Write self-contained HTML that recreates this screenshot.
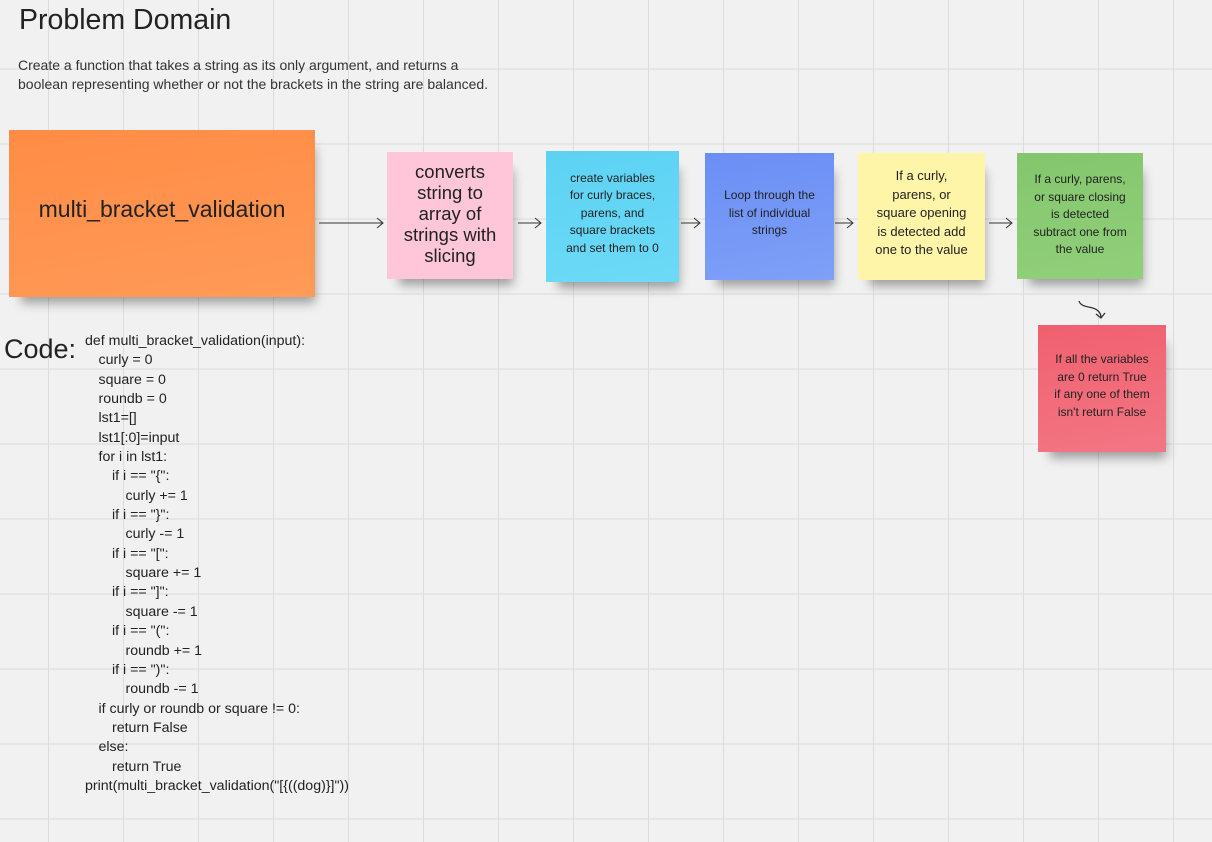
<!DOCTYPE html>
<html><head><meta charset="utf-8"><style>
html,body{margin:0;padding:0}
body{width:1212px;height:842px;overflow:hidden;position:relative;background:#f1f1f1;font-family:"Liberation Sans",sans-serif;color:#222;
background-image:linear-gradient(to right,#dcdcdc 0,#dcdcdc 1px,transparent 1px),linear-gradient(to bottom,#e6e6e6 0,#e6e6e6 2px,transparent 2px);
background-size:75px 75px,75px 75px;background-position:48px 0,0 68px}
.a{position:absolute}
.n{position:absolute;display:flex;align-items:center;justify-content:center;text-align:center;box-sizing:border-box;box-shadow:6px 12px 10px -6px rgba(0,0,0,.35);white-space:nowrap}
.t{font-size:12px;line-height:17.5px;color:#222}
.code{position:absolute;left:85px;top:332px;font-size:14.2px;line-height:19.35px;white-space:pre;color:#222}
.code div{height:19.35px}
.i1{margin-left:13.5px}.i2{margin-left:27px}.i3{margin-left:40.5px}
</style></head><body>
<div class="a" style="left:19px;top:4px;font-size:28.5px;color:#222">Problem Domain</div>
<div class="a" style="left:18px;top:56px;font-size:14px;line-height:19px;color:#333;white-space:nowrap">Create a function that takes a string as its only argument, and returns a<br>boolean representing whether or not the brackets in the string are balanced.</div>

<div class="n" style="left:9px;top:130px;width:306px;height:167px;background:linear-gradient(170deg,#ff8c45,#ff9a58);font-size:23px;padding-bottom:8px">multi_bracket_validation</div>
<div class="n" style="left:387px;top:152px;width:126px;height:127px;background:#fec6d8;font-size:18.5px;line-height:21px;padding-bottom:5px">converts<br>string to<br>array of<br>strings with<br>slicing</div>
<div class="n t" style="left:546px;top:151px;width:133px;height:131px;background:linear-gradient(170deg,#5dd2f3,#6cdaf7);padding-bottom:6px">create variables<br>for curly braces,<br>parens, and<br>square brackets<br>and set them to 0</div>
<div class="n t" style="left:705px;top:153px;width:129px;height:127px;background:linear-gradient(170deg,#6a8ef5,#7fa0f7);align-items:flex-start;padding-top:34px">Loop through the<br>list of individual<br>strings</div>
<div class="n" style="left:858px;top:153px;width:127px;height:127px;background:#fff5a8;font-size:13px;line-height:18.5px;padding-bottom:6px">If a curly,<br>parens, or<br>square opening<br>is detected add<br>one to the value</div>
<div class="n t" style="left:1017px;top:153px;width:126px;height:126px;background:linear-gradient(170deg,#83c66d,#92cf7a);align-items:flex-start;padding-top:18px">If a curly, parens,<br>or square closing<br>is detected<br>subtract one from<br>the value</div>
<div class="n t" style="left:1038px;top:325px;width:128px;height:127px;background:linear-gradient(170deg,#f0606f,#f37684);align-items:flex-start;padding-top:26px">If all the variables<br>are 0 return True<br>if any one of them<br>isn't return False</div>

<svg class="a" style="left:0;top:0" width="1212" height="842" fill="none" stroke="#333" stroke-width="1">
<path d="M319 223H383M377 218L383 223L377 228"/>
<path d="M518 223H541M535 218L541 223L535 228"/>
<path d="M681 223H700M694 218L700 223L694 228"/>
<path d="M835 223H853M847 218L853 223L847 228"/>
<path d="M989 223H1012M1006 218L1012 223L1006 228"/>
<path d="M1079 301C1081 308 1092 306 1097 310C1101 313 1101 316 1101 318M1096 314L1101 318L1105 313" stroke-width="1.3"/>
</svg>

<div class="a" style="left:4px;top:334px;font-size:27px;color:#222">Code:</div>
<div class="code"><div>def multi_bracket_validation(input):</div><div class="i1">curly = 0</div><div class="i1">square = 0</div><div class="i1">roundb = 0</div><div class="i1">lst1=[]</div><div class="i1">lst1[:0]=input</div><div class="i1">for i in lst1:</div><div class="i2">if i == "{":</div><div class="i3">curly += 1</div><div class="i2">if i == "}":</div><div class="i3">curly -= 1</div><div class="i2">if i == "[":</div><div class="i3">square += 1</div><div class="i2">if i == "]":</div><div class="i3">square -= 1</div><div class="i2">if i == "(":</div><div class="i3">roundb += 1</div><div class="i2">if i == ")":</div><div class="i3">roundb -= 1</div><div class="i1">if curly or roundb or square != 0:</div><div class="i2">return False</div><div class="i1">else:</div><div class="i2">return True</div><div>print(multi_bracket_validation("[{((dog)}]"))</div></div>
</body></html>
